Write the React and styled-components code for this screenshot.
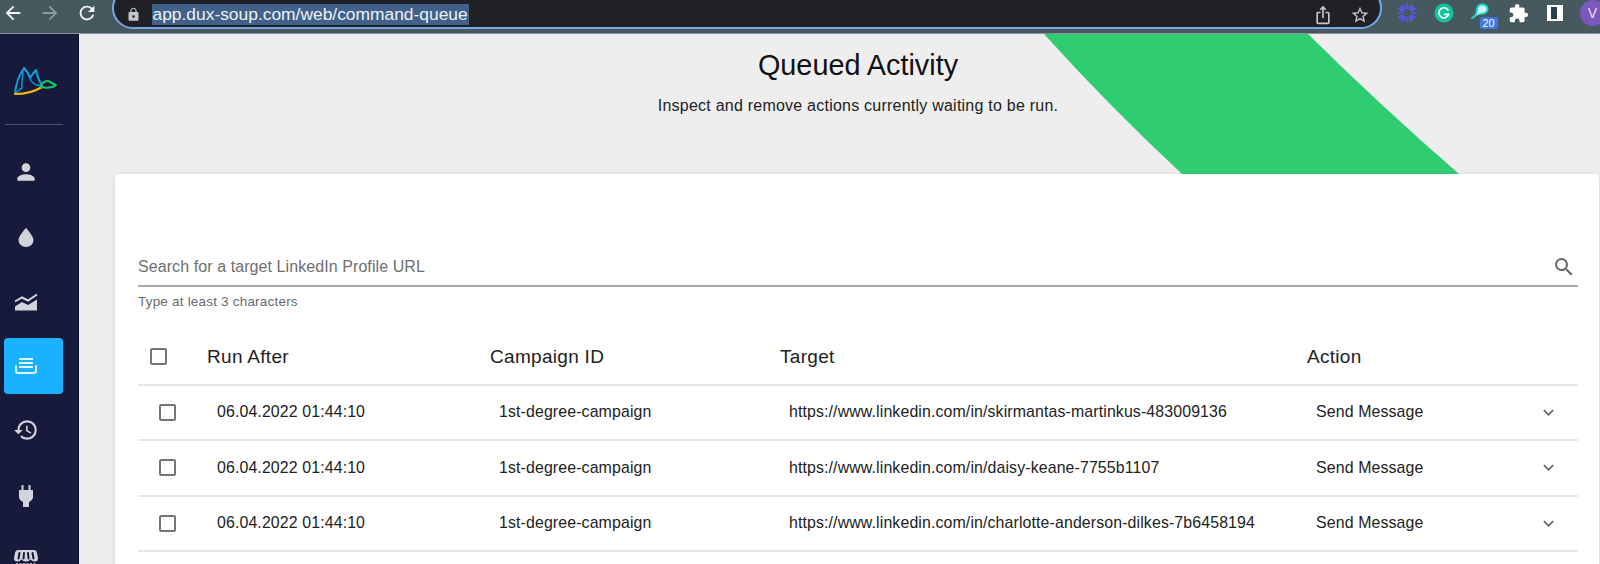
import React from 'react';
import styled, { createGlobalStyle } from 'styled-components';
import {
  MdArrowBack, MdArrowForward, MdRefresh, MdLock, MdIosShare, MdStarBorder, MdExtension,
  MdPerson, MdHistory, MdSearch, MdExpandMore,
} from 'react-icons/md';

const GlobalStyle = createGlobalStyle`
  html, body {
    margin: 0;
    height: 100%;
    overflow: hidden;
    background: #eee;
    font-family: "Liberation Sans", Arial, sans-serif;
  }
`;

const Page = styled.div`
  width: 1600px;
  height: 564px;
  display: flex;
  flex-direction: column;
  overflow: hidden;
`;

const BrowserBar = styled.header`
  height: 34px;
  flex: none;
  display: flex;
  align-items: flex-start;
  background: #46595f;
  border-bottom: 1px solid #8a9498;
  box-sizing: border-box;
  overflow: hidden;
`;

const NavGroup = styled.div`
  width: 112px;
  flex: none;
  display: flex;
`;

const NavButton = styled.span`
  width: 26px;
  height: 26px;
  margin-right: 11px;
  flex: none;
  display: flex;
  align-items: center;
  justify-content: center;
  font-size: 22px;
  color: ${(p) => (p.$dim ? '#8f9a9e' : '#f4f6f6')};
`;

const Omnibox = styled.div`
  width: 1270px;
  height: 42px;
  margin-top: -13px;
  flex: none;
  box-sizing: border-box;
  padding: 13px 10px 0 11.5px;
  display: flex;
  align-items: center;
  border: 2.5px solid #7ba6e6;
  border-radius: 21px;
  background: #202124;
`;

const LockIcon = styled(MdLock)`
  font-size: 15px;
  color: #c4c7c9;
  flex: none;
  margin-right: 11px;
`;

const UrlText = styled.span`
  background: #3f618a;
  color: #eef1f4;
  font-size: 17.4px;
  line-height: 21px;
  padding: 0 1px;
  white-space: nowrap;
`;

const OmniActions = styled.div`
  margin-left: auto;
  display: flex;
  gap: 17px;
  font-size: 20px;
  color: #c6c9cb;
`;

const Extensions = styled.div`
  flex: 1;
  display: flex;
  align-items: center;
  height: 26px;
  padding-left: 6.5px;
`;

const ExtSlot = styled.span`
  position: relative;
  width: 37px;
  flex: none;
  display: flex;
  justify-content: center;
  align-items: center;
`;

const Badge = styled.span`
  position: absolute;
  left: 17px;
  top: 14px;
  width: 18px;
  height: 12px;
  border-radius: 2px;
  background: #3b78e0;
  color: #fff;
  font-size: 11px;
  line-height: 12px;
  text-align: center;
`;

const Avatar = styled.span`
  width: 26px;
  height: 26px;
  flex: none;
  margin-left: 6px;
  border-radius: 50%;
  background: #7c58bd;
  color: #e6def5;
  font-size: 14px;
  line-height: 26px;
  text-align: center;
`;

const Body = styled.div`
  flex: 1;
  min-height: 0;
  display: flex;
`;

const Sidebar = styled.aside`
  width: 79px;
  flex: none;
  background: #171a3b;
  border-right: 1px solid #0d0f2a;
  box-sizing: border-box;
  overflow: hidden;
  padding: 0 0 0 5px;
`;

const LogoArea = styled.div`
  height: 91px;
  box-sizing: border-box;
  border-bottom: 1px solid #4e5068;
  width: 58px;
  padding: 32px 0 0 8px;
`;

const NavList = styled.nav`
  display: flex;
  flex-direction: column;
  gap: 8.6px;
  margin-top: 19px;
  margin-left: -1px;
`;

const NavItem = styled.div`
  width: 59px;
  height: 56px;
  flex: none;
  box-sizing: border-box;
  padding-left: 9px;
  display: flex;
  align-items: center;
  border-radius: 4px;
  font-size: 26px;
  color: ${(p) => (p.$active ? '#dff4ff' : '#d3d4db')};
  background: ${(p) => (p.$active ? '#1ab2ff' : 'transparent')};
`;

const Main = styled.main`
  flex: 1;
  min-width: 0;
  position: relative;
  background: #eee;
  padding: 0 1px 0 36px;
`;

const GreenBand = styled.svg`
  position: absolute;
  left: 964px;
  top: 0;
`;

const Hero = styled.section`
  position: relative;
  height: 140px;
  box-sizing: border-box;
  padding: 14px 0 0 2px;
  text-align: center;
  color: #111;
`;

const Title = styled.h1`
  margin: 0;
  font-size: 28.8px;
  line-height: 34px;
  font-weight: 400;
`;

const Subtitle = styled.p`
  margin: 14px 0 0;
  font-size: 16px;
  line-height: 20px;
  letter-spacing: 0.23px;
  color: #222;
`;

const Card = styled.section`
  position: relative;
  height: 420px;
  box-sizing: border-box;
  padding: 72px 21px 0 23px;
  background: #fff;
  border-radius: 4px 4px 0 0;
  box-shadow: 0 1px 4px rgba(0, 0, 0, 0.14);
`;

const SearchField = styled.div`
  height: 41px;
  box-sizing: border-box;
  display: flex;
  align-items: center;
  justify-content: space-between;
  padding: 3px 2px 0 0;
  border-bottom: 2px solid #a8a8a8;
  font-size: 16px;
  letter-spacing: 0.08px;
  color: #6f6f6f;
`;

const SearchIcon = styled(MdSearch)`
  font-size: 24px;
  color: #666;
`;

const Helper = styled.div`
  margin-top: 7px;
  font-size: 13.5px;
  line-height: 15px;
  letter-spacing: 0.2px;
  color: #6a6a6a;
`;

const TableHeader = styled.div`
  margin-top: 16.5px;
  height: 60px;
  box-sizing: border-box;
  padding: 4px 0 0 12px;
  display: grid;
  grid-template-columns: 57px 283px 290px 527px 1fr;
  align-items: center;
  border-bottom: 2px solid #e6e6e6;
  font-size: 19px;
  letter-spacing: 0.3px;
  color: #222;
`;

const Row = styled.div`
  height: 55.5px;
  box-sizing: border-box;
  padding: 0 19px 0 21px;
  display: grid;
  grid-template-columns: 58px 282px 290px 527px 1fr;
  align-items: center;
  border-bottom: 2px solid #e6e6e6;
  font-size: 15.9px;
  letter-spacing: 0.12px;
  color: #222;
`;

const Check = styled.span`
  width: 17px;
  height: 17px;
  box-sizing: border-box;
  border: 2px solid #757575;
  border-radius: 2px;
`;

const ActionCell = styled.div`
  display: flex;
  align-items: center;
  justify-content: space-between;
`;

const Chevron = styled(MdExpandMore)`
  font-size: 21px;
  color: #666;
`;

const DuckLogo = () => (
  <svg width="46" height="32" viewBox="13 66 46 32" fill="none" strokeLinecap="round" strokeLinejoin="round">
    <path d="M15 93 C16 85 19 75 24 68 C27 71 29 75 30 78 C32 75 34 72 36 70 C37 75 39 81 42 85" stroke="#0fa4de" strokeWidth="2" />
    <path d="M23 70 C23 77 21 83 22 88 C19 90 17 92 15 93" stroke="#0a8fc9" strokeWidth="1.6" />
    <path d="M30 78 C31 82 34 85 41 86" stroke="#0a8fc9" strokeWidth="1.6" />
    <path d="M15 94 C25 94 34 92 42 87" stroke="#f2b70f" strokeWidth="2.2" />
    <path d="M41 85 C44 81 48 80 50 82 L56 85 C52 88 46 88 41 87 Z" stroke="#16c36b" strokeWidth="2" />
  </svg>
);

const DropIcon = () => (
  <svg width="26" height="26" viewBox="0 0 26 26" fill="currentColor">
    <path d="M13 4 C13 4 20.5 12 20.5 16 a7.5 7 0 0 1 -15 0 C5.5 12 13 4 13 4 Z" />
  </svg>
);

const AreaIcon = () => (
  <svg width="26" height="26" viewBox="-1 -2.5 26 26" fill="currentColor">
    <path d="M1 11 L8 7 L14 10 L23 4" fill="none" stroke="currentColor" strokeWidth="2" />
    <path d="M1 20 V16 L8 11.5 L14 14.5 L23 9 V20 Z" />
  </svg>
);

const QueueIcon = () => (
  <svg width="26" height="26" viewBox="0 0 26 26" fill="none" stroke="currentColor" strokeWidth="1.9">
    <path d="M6 6h14M6 10h14M6 14h14" />
    <path d="M3 13v5q0 2 2 2h16q2 0 2-2v-5" strokeLinecap="round" />
  </svg>
);

const PlugIcon = () => (
  <svg width="26" height="26" viewBox="0 0 26 26" fill="currentColor">
    <path d="M8.5 3h2v6h-2zM15.5 3h2v6h-2z" />
    <path d="M6 8 H20 V15 Q20 18 16 20 V25 H10 V20 Q6 18 6 15 Z" />
  </svg>
);

const AwningIcon = () => (
  <svg width="26" height="26" viewBox="0 0 26 26" fill="currentColor">
    <path d="M5 3 H21 Q23.5 3 24 6 L25 11 Q25 14.5 22 14.5 Q19 14.5 17.5 12.5 Q16 14.5 13 14.5 Q10 14.5 8.5 12.5 Q7 14.5 4 14.5 Q1 14.5 1 11 L2 6 Q2.5 3 5 3 Z" />
    <path d="M6.5 6 L5.5 11.5 M11 6 L10.5 11.5 M15 6 L15.5 11.5 M19.5 6 L20.5 11.5" stroke="#171a3b" strokeWidth="2" strokeLinecap="round" />
    <path d="M3 17 H23" stroke="currentColor" strokeWidth="1.5" strokeDasharray="2 1.5" />
  </svg>
);

const SparkIcon = () => (
  <svg width="20" height="20" viewBox="0 0 20 20" stroke="#5a57f0" strokeWidth="1.6" strokeLinecap="round">
    <path d="M10 1v18M1 10h18M3.6 3.6l12.8 12.8M16.4 3.6L3.6 16.4M5.8 1.8l8.4 16.4M14.2 1.8L5.8 18.2M1.8 5.8l16.4 8.4M18.2 5.8L1.8 14.2" />
    <circle cx="10" cy="10" r="4" fill="#46595f" stroke="none" />
  </svg>
);

const GrammarlyIcon = () => (
  <svg width="20" height="20" viewBox="0 0 20 20" fill="none">
    <circle cx="10" cy="10" r="9.5" fill="#15c39a" />
    <path d="M14 7a5 5 0 1 0 .6 4.4H10.6" stroke="#fff" strokeWidth="1.6" strokeLinecap="round" />
  </svg>
);

const BirdIcon = () => (
  <svg width="22" height="20" viewBox="0 0 22 20" fill="none">
    <path d="M2 15 C5 14 7 11 7 6 a5.5 5.5 0 0 1 10.5 -1 C18 9 15 11 10 11" fill="#c9f4f1" stroke="#22d3cf" strokeWidth="2" strokeLinecap="round" />
  </svg>
);

const PanelIcon = () => (
  <svg width="16" height="16" viewBox="0 0 16 16">
    <rect width="16" height="16" fill="#fff" />
    <rect x="4" y="2" width="6" height="12" fill="#24414d" />
  </svg>
);

const rows = [
  'https://www.linkedin.com/in/skirmantas-martinkus-483009136',
  'https://www.linkedin.com/in/daisy-keane-7755b1107',
  'https://www.linkedin.com/in/charlotte-anderson-dilkes-7b6458194',
];

const App = () => (
  <Page>
    <GlobalStyle />
    <BrowserBar>
      <NavGroup>
        <NavButton><MdArrowBack /></NavButton>
        <NavButton $dim><MdArrowForward /></NavButton>
        <NavButton><MdRefresh /></NavButton>
      </NavGroup>
      <Omnibox>
        <LockIcon />
        <UrlText>app.dux-soup.com/web/command-queue</UrlText>
        <OmniActions>
          <MdIosShare />
          <MdStarBorder />
        </OmniActions>
      </Omnibox>
      <Extensions>
        <ExtSlot><SparkIcon /></ExtSlot>
        <ExtSlot><GrammarlyIcon /></ExtSlot>
        <ExtSlot><BirdIcon /><Badge>20</Badge></ExtSlot>
        <ExtSlot><MdExtension color="#fff" size={21} /></ExtSlot>
        <ExtSlot><PanelIcon /></ExtSlot>
        <Avatar>V</Avatar>
      </Extensions>
    </BrowserBar>
    <Body>
      <Sidebar>
        <LogoArea><DuckLogo /></LogoArea>
        <NavList>
          <NavItem><MdPerson /></NavItem>
          <NavItem><DropIcon /></NavItem>
          <NavItem><AreaIcon /></NavItem>
          <NavItem $active><QueueIcon /></NavItem>
          <NavItem><MdHistory /></NavItem>
          <NavItem><PlugIcon /></NavItem>
          <NavItem><AwningIcon /></NavItem>
        </NavList>
      </Sidebar>
      <Main>
        <GreenBand width="420" height="140" viewBox="0 0 420 140">
          <path d="M1 0 Q66 72 139 140 L416 140 Q340 74 265 0 Z" fill="#2fcc71" />
        </GreenBand>
        <Hero>
          <Title>Queued Activity</Title>
          <Subtitle>Inspect and remove actions currently waiting to be run.</Subtitle>
        </Hero>
        <Card>
          <SearchField>
            Search for a target LinkedIn Profile URL
            <SearchIcon />
          </SearchField>
          <Helper>Type at least 3 characters</Helper>
          <TableHeader>
            <Check />
            <span>Run After</span>
            <span>Campaign ID</span>
            <span>Target</span>
            <span>Action</span>
          </TableHeader>
          {rows.map((url) => (
            <Row key={url}>
              <Check />
              <span>06.04.2022 01:44:10</span>
              <span>1st-degree-campaign</span>
              <span>{url}</span>
              <ActionCell>
                Send Message
                <Chevron />
              </ActionCell>
            </Row>
          ))}
        </Card>
      </Main>
    </Body>
  </Page>
);

export default App;
